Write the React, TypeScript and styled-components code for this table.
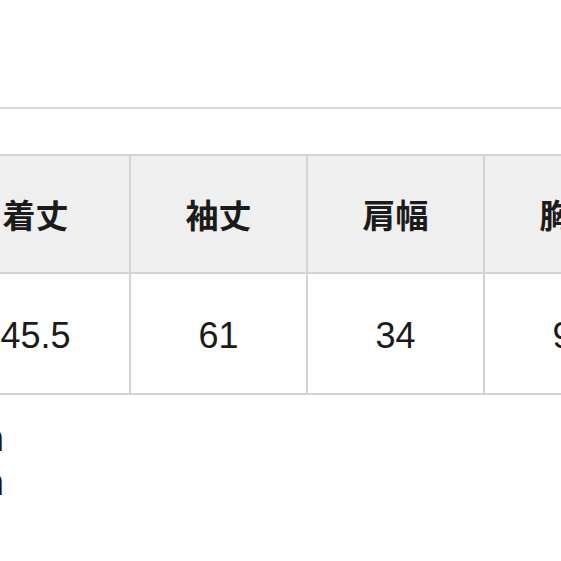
import React from "react";
import styled, { createGlobalStyle } from "styled-components";

const Global = createGlobalStyle`
  html, body {
    margin: 0;
    padding: 0;
    background: #ffffff;
    overflow: hidden;
  }
  body {
    width: 561px;
    height: 561px;
    font-family: "Liberation Sans", Arial, "Noto Sans CJK JP", sans-serif;
    color: #1b1b1b;
  }
`;

const Page = styled.div`
  display: flex;
  flex-direction: column;
  padding-top: 107px;
  width: 561px;
`;

const Divider = styled.div`
  height: 2px;
  background: #d6d6d6;
  width: 100%;
`;

const Table = styled.div`
  margin-top: 45px;
  margin-left: -58px;
  display: grid;
  grid-template-columns: 189px 177px 177px 177px;
  grid-template-rows: 118px 121px;
  border-top: 2px solid #d3d3d3;
  width: max-content;
`;

const Cell = styled.div<{ $head?: boolean }>`
  box-sizing: border-box;
  display: flex;
  align-items: center;
  justify-content: center;
  border-right: 2px solid #d3d3d3;
  border-bottom: 2px solid #d3d3d3;
  background: ${(p) => (p.$head ? "#efefef" : "#ffffff")};
  font-family: ${(p) =>
    p.$head
      ? `"Noto Sans CJK JP", "Noto Sans CJK SC", sans-serif`
      : `"Liberation Sans", Arial, sans-serif`};
  font-weight: ${(p) => (p.$head ? 700 : 400)};
  font-size: ${(p) => (p.$head ? "33px" : "36px")};
  padding-top: ${(p) => (p.$head ? "0" : "5px")};
  color: #1b1b1b;
`;

const Notes = styled.div`
  margin-top: 22px;
  margin-left: -46px;
  width: 50px;
  text-align: right;
  font-family: "Liberation Sans", Arial, sans-serif;
  font-size: 36px;
  line-height: 44px;
  white-space: nowrap;
  direction: rtl;
  overflow: visible;
`;

const NoteLine = styled.div`
  direction: ltr;
  unicode-bidi: plaintext;
`;

const heads = ["着丈", "袖丈", "肩幅", "胸囲"];
const values = ["45.5", "61", "34", "92"];

export default function App() {
  return (
    <>
      <Global />
      <Page>
        <Divider />
        <Table>
          {heads.map((h) => (
            <Cell $head key={h}>
              {h}
            </Cell>
          ))}
          {values.map((v, i) => (
            <Cell key={i}>{v}</Cell>
          ))}
        </Table>
        <Notes>
          <NoteLine>cm</NoteLine>
          <NoteLine>cm</NoteLine>
        </Notes>
      </Page>
    </>
  );
}
